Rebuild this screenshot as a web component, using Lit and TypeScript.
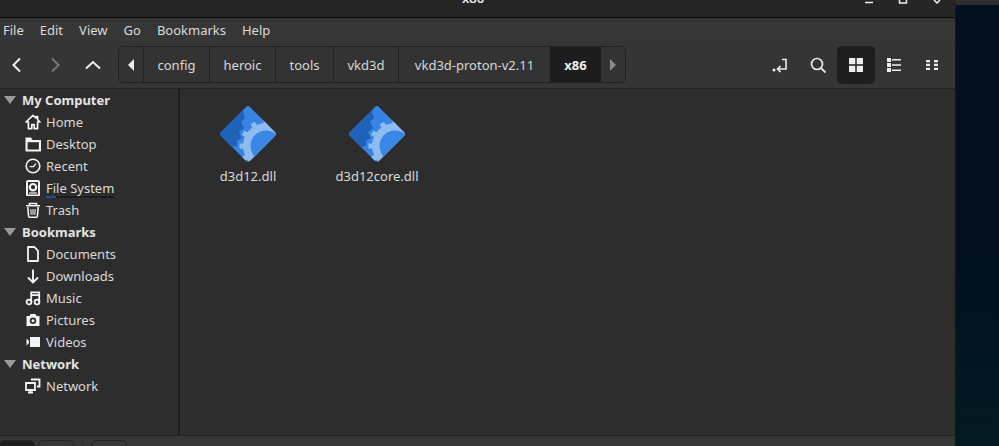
import { LitElement, html, css, svg } from 'lit';
import { customElement } from 'lit/decorators.js';

type Place = { label: string; icon: keyof typeof icons; mark?: boolean };
type Section = { title: string; items: Place[] };

const icons = {
  home: svg`<path d="M8 1.400 1 8h2.400v6.600h3.400v-4h2.400v4h3.400V8H15l-2.400-2.300V2.600h-1.800v1.400z" fill="none" stroke="currentColor" stroke-width="1.700" stroke-linejoin="round"/>`,
  folder: svg`<path d="M.5 1.500h5.500L7.500 4H16v11.500H.5z" fill="currentColor"/><path d="M2.600 6.200h11.300v7.300H2.600z" fill="#2d2d2d"/>`,
  clock: svg`<circle cx="8" cy="8" r="6.800" fill="none" stroke="currentColor" stroke-width="1.600"/><path d="M4.600 8.600h3.800l2.600-3" fill="none" stroke="currentColor" stroke-width="1.400"/>`,
  disk: svg`<rect x="2" y="1" width="12" height="14.500" rx="1" fill="none" stroke="currentColor" stroke-width="2"/><circle cx="8" cy="7.200" r="3.200" fill="none" stroke="currentColor" stroke-width="2.200"/><path d="M4 13h8" stroke="currentColor" stroke-width="1.200"/>`,
  trash: svg`<path d="M1 3.800h14M2.800 5l.8 9.400a1 1 0 0 0 1 .8h6.800a1 1 0 0 0 1-.8l.8-9.400M4.500 3.500V1.500h7v2" fill="none" stroke="currentColor" stroke-width="1.600"/><path d="M5.800 7l.4 5.800M8 7v5.800M10.200 7l-.4 5.800" stroke="currentColor" stroke-width="1.100"/>`,
  doc: svg`<path d="M3 1h6.500L13 4.800V15H3z" fill="none" stroke="currentColor" stroke-width="1.800" stroke-linejoin="round"/>`,
  down: svg`<path d="M8 1.500v12.500M3 9.500 8 14.500l5-5" fill="none" stroke="currentColor" stroke-width="1.900"/>`,
  music: svg`<circle cx="4" cy="12" r="2.400" fill="none" stroke="currentColor" stroke-width="1.800"/><circle cx="12" cy="12" r="2.400" fill="none" stroke="currentColor" stroke-width="1.800"/><path d="M6.200 12V2.400h8V12M6.200 5.200h8" fill="none" stroke="currentColor" stroke-width="1.800"/>`,
  camera: svg`<path d="M1.500 4h3l1-2h5l1 2h3v10h-13z" fill="currentColor"/><circle cx="8" cy="8.800" r="3.200" fill="#2d2d2d"/><circle cx="8" cy="8.800" r="1.500" fill="currentColor"/>`,
  video: svg`<path d="M5 3h10v10H5z" fill="currentColor"/><path d="M1.500 4.500 4 7V9L1.500 11.500z" fill="currentColor"/>`,
  network: svg`<path d="M1 5h9v7H1z" fill="none" stroke="currentColor" stroke-width="1.800"/><path d="M6 1.500h8.500v7H12" fill="none" stroke="currentColor" stroke-width="1.800"/><path d="M3 14.500h5M5.500 12v2.500" stroke="currentColor" stroke-width="1.800"/>`,
};

const sections: Section[] = [
  {
    title: 'My Computer',
    items: [
      { label: 'Home', icon: 'home' },
      { label: 'Desktop', icon: 'folder' },
      { label: 'Recent', icon: 'clock' },
      { label: 'File System', icon: 'disk', mark: true },
      { label: 'Trash', icon: 'trash' },
    ],
  },
  {
    title: 'Bookmarks',
    items: [
      { label: 'Documents', icon: 'doc' },
      { label: 'Downloads', icon: 'down' },
      { label: 'Music', icon: 'music' },
      { label: 'Pictures', icon: 'camera' },
      { label: 'Videos', icon: 'video' },
    ],
  },
  { title: 'Network', items: [{ label: 'Network', icon: 'network' }] },
];

const menus = ['File', 'Edit', 'View', 'Go', 'Bookmarks', 'Help'];
const crumbs = ['config', 'heroic', 'tools', 'vkd3d', 'vkd3d-proton-v2.11'];
const files = ['d3d12.dll', 'd3d12core.dll'];

// 12 gear teeth round the same centre as the ring
const teeth = Array.from({ length: 12 }, (_, i) => i * 30);

const dllIcon = html`<svg class="dll" viewBox="0 0 64 64">
  <defs>
    <clipPath id="diamond">
      <rect x="11.500" y="10.500" width="41" height="41" rx="3" transform="rotate(45 32 31)"/>
    </clipPath>
  </defs>
  <g clip-path="url(#diamond)">
    <rect width="64" height="64" fill="#3784e2"/>
    <path d="M28 0 L27 9 L29 15 L25 19 L28 25 L23 29 L26 35 L21 38 L21 43 L15 44 L0 44 L0 0z" fill="#1f62b9"/>
    <circle cx="50" cy="43" r="23" fill="#8fbcf0"/>
    ${teeth.map(
      (a) => svg`<rect x="47.500" y="16.500" width="5" height="6" fill="#8fbcf0" transform="rotate(${a} 50 43)"/>`
    )}
    <circle cx="50" cy="43" r="15.500" fill="#3a88e6"/>
  </g>
</svg>`;

@customElement('app-root')
export class AppRoot extends LitElement {
  static styles = css`
    :host {
      display: flex;
      width: 999px;
      height: 446px;
      overflow: hidden;
      font-family: 'Noto Sans', sans-serif;
      font-size: 13px;
      color: #dadada;
      background: #02111f;
    }
    .window {
      width: 955px;
      height: 100%;
      display: flex;
      flex-direction: column;
      background: #2d2d2d;
      flex: none;
    }
    .desktop {
      flex: 1;
      background: linear-gradient(#02101f 0, #02101f 55%, #021a22 100%);
      border-left: 1px solid #151515;
      border-top: 5px solid #2e2e2e;
    }
    .titlebar {
      height: 17px;
      flex: none;
      position: relative;
      background: #262626;
      border-bottom: 1px solid #0c0c0c;
      text-align: center;
      overflow: hidden;
      color: #e8e8e8;
      font-weight: 600;
    }
    .titlebar .name {
      display: block;
      padding-right: 9px;
      line-height: 0;
      margin-top: -2px;
    }
    .winbtns {
      position: absolute;
      right: 12px;
      top: 0;
      display: flex;
      gap: 22px;
    }
    .winbtns svg {
      width: 12px;
      height: 4px;
    }
    .menubar {
      height: 23px;
      flex: none;
      display: flex;
      align-items: center;
      gap: 16px;
      padding-left: 3px;
      background: #363636;
    }
    .toolbar {
      height: 47px;
      flex: none;
      display: flex;
      align-items: center;
      background: #353535;
    }
    .nav {
      width: 38px;
      height: 36px;
      display: flex;
      align-items: center;
      justify-content: center;
      flex: none;
    }
    .nav svg {
      width: 18px;
      height: 18px;
      margin-right: 4px;
    }
    .navs {
      display: flex;
      width: 118px;
      flex: none;
    }
    .path {
      display: grid;
      grid-template-columns: 25px 66px 66px 58px 65px 151px 51px 24px;
      height: 37px;
      box-sizing: border-box;
      border: 1px solid #222;
      border-radius: 5px;
      background: #333;
      overflow: hidden;
      flex: none;
    }
    .crumb {
      display: flex;
      align-items: center;
      justify-content: center;
      border-right: 1px solid #222;
      color: #d8d8d8;
      white-space: nowrap;
    }
    .crumb:nth-last-child(3) {
      border-right: 0;
    }
    .crumb.on {
      background: #1d1d1d;
      color: #eee;
      font-weight: 700;
      border: 0;
    }
    .arrow {
      display: flex;
      align-items: center;
      justify-content: center;
    }
    .arrow.left {
      border-right: 1px solid #222;
    }
    .tools {
      margin-left: auto;
      display: flex;
      align-items: center;
      margin-right: 4px;
    }
    .tool {
      width: 38px;
      height: 38px;
      display: flex;
      align-items: center;
      justify-content: center;
      border-radius: 5px;
    }
    .tool.on {
      background: #1e1e1e;
    }
    .tool svg {
      width: 16px;
      height: 16px;
    }
    .main {
      flex: 1;
      display: flex;
      min-height: 0;
    }
    .sidebar {
      width: 178px;
      flex: none;
      background: #2d2d2d;
      border-right: 2px solid #1f1f1f;
      border-top: 1px solid #222;
      border-bottom: 1px solid #222;
    }
    .head {
      height: 22px;
      display: flex;
      align-items: center;
      font-weight: 700;
      color: #e4e4e4;
    }
    .head svg {
      width: 12px;
      height: 8px;
      margin: 0 6px 0 4px;
    }
    .row {
      height: 22px;
      display: flex;
      align-items: center;
      padding-left: 25px;
    }
    .row svg {
      width: 16px;
      height: 16px;
      margin-right: 5px;
      color: #f4f4f4;
    }
    .label {
      position: relative;
    }
    .label.mark::after {
      content: '';
      position: absolute;
      left: 0;
      right: 0;
      bottom: -1px;
      height: 2px;
      background: linear-gradient(90deg, #1c4f99 14%, #1d1d1d 14%);
    }
    .files {
      flex: 1;
      display: flex;
      align-items: flex-start;
      gap: 29px;
      padding: 14px 0 0 18px;
      border-top: 1px solid #222;
      border-bottom: 1px solid #222;
    }
    .file {
      width: 100px;
      display: flex;
      flex-direction: column;
      align-items: center;
    }
    .dll {
      width: 64px;
      height: 64px;
    }
    .status {
      height: 10px;
      flex: none;
      box-sizing: border-box;
      padding-top: 4px;
      display: flex;
      background: #363636;
      overflow: hidden;
    }
    .status span {
      width: 36px;
      height: 12px;
      flex: none;
      border: 1px solid #242424;
      border-radius: 5px;
      box-sizing: border-box;
      margin-left: 3px;
    }
    .status span:first-child {
      background: #1e1e1e;
      margin-left: -1px;
    }
    .status i {
      width: 1px;
      height: 6px;
      background: #2c2c2c;
      margin-left: 8px;
    }
    .status i + span {
      margin-left: 8px;
    }
  `;

  render() {
    return html`
      <div class="window">
        <div class="titlebar">
          <span class="name">x86</span>
          <div class="winbtns">
            <svg viewBox="0 0 12 4"><path d="M2 2.500h8" stroke="#eee" stroke-width="1.500"/></svg>
            <svg viewBox="0 0 12 4"><path d="M2.500 0v3h7V0" fill="none" stroke="#eee" stroke-width="1.500"/></svg>
            <svg viewBox="0 0 12 4"><path d="M3 0 6 3 9 0" fill="none" stroke="#eee" stroke-width="1.500"/></svg>
          </div>
        </div>
        <div class="menubar">${menus.map((m) => html`<span>${m}</span>`)}</div>
        <div class="toolbar">
          <div class="navs">
            <div class="nav"><svg viewBox="0 0 18 18"><path d="M12 2.500 5.500 9l6.500 6.500" fill="none" stroke="#eee" stroke-width="2"/></svg></div>
            <div class="nav"><svg viewBox="0 0 18 18"><path d="M6 2.500 12.500 9 6 15.500" fill="none" stroke="#777" stroke-width="2"/></svg></div>
            <div class="nav"><svg viewBox="0 0 18 18"><path d="M2 12.500 9 6l7 6.500" fill="none" stroke="#eee" stroke-width="2"/></svg></div>
          </div>
          <div class="path">
            <div class="arrow left"><svg width="6" height="12" viewBox="0 0 6 12"><path d="M6 0v12L0 6z" fill="#eee"/></svg></div>
            ${crumbs.map((c) => html`<div class="crumb">${c}</div>`)}
            <div class="crumb on">x86</div>
            <div class="arrow"><svg width="6" height="12" viewBox="0 0 6 12"><path d="M0 0v12l6-6z" fill="#8a8a8a"/></svg></div>
          </div>
          <div class="tools">
            <div class="tool"><svg viewBox="0 0 16 16"><circle cx="2" cy="13" r="1.500" fill="#eee"/><path d="M10 2.500h4v9.500H6M8.500 9 5.500 12l3 3" fill="none" stroke="#eee" stroke-width="1.600"/></svg></div>
            <div class="tool"><svg viewBox="0 0 16 16"><circle cx="7" cy="7" r="5.500" fill="none" stroke="#e8e8e8" stroke-width="1.700"/><path d="m11 11 4.500 4.500" stroke="#e8e8e8" stroke-width="1.900"/></svg></div>
            <div class="tool on"><svg viewBox="0 0 16 16"><path d="M1 1h6.300v6.300H1zM8.700 1H15v6.300H8.700zM1 8.700h6.300V15H1zM8.700 8.700H15V15H8.700z" fill="#eee"/></svg></div>
            <div class="tool"><svg viewBox="0 0 16 16"><path d="M1 1h4v4H1zM1 6h4v4H1zM1 11h4v4H1zM6 2h9v1.500H6zM6 7.300h9v1.500H6zM6 12.500h9V14H6z" fill="#eee"/></svg></div>
            <div class="tool"><svg viewBox="0 0 16 16"><path d="M2 3h4v2.300H2zM10 3h4v2.300h-4zM2 6.700h4V9H2zM10 6.700h4V9h-4zM2 10.700h4V13H2zM10 10.700h4V13h-4z" fill="#eee"/></svg></div>
          </div>
        </div>
        <div class="main">
          <div class="sidebar">
            ${sections.map(
              (s) => html`
                <div class="head">
                  <svg viewBox="0 0 12 8"><path d="M0 0h12L6 8z" fill="#9a9a9a"/></svg>${s.title}
                </div>
                ${s.items.map(
                  (i) => html`<div class="row">
                    <svg viewBox="0 0 16 16">${icons[i.icon]}</svg>
                    <span class="label ${i.mark ? 'mark' : ''}">${i.label}</span>
                  </div>`
                )}
              `
            )}
          </div>
          <div class="files">
            ${files.map((f) => html`<div class="file">${dllIcon}<span>${f}</span></div>`)}
          </div>
        </div>
        <div class="status"><span></span><span></span><i></i><span></span></div>
      </div>
      <div class="desktop"></div>
    `;
  }
}
